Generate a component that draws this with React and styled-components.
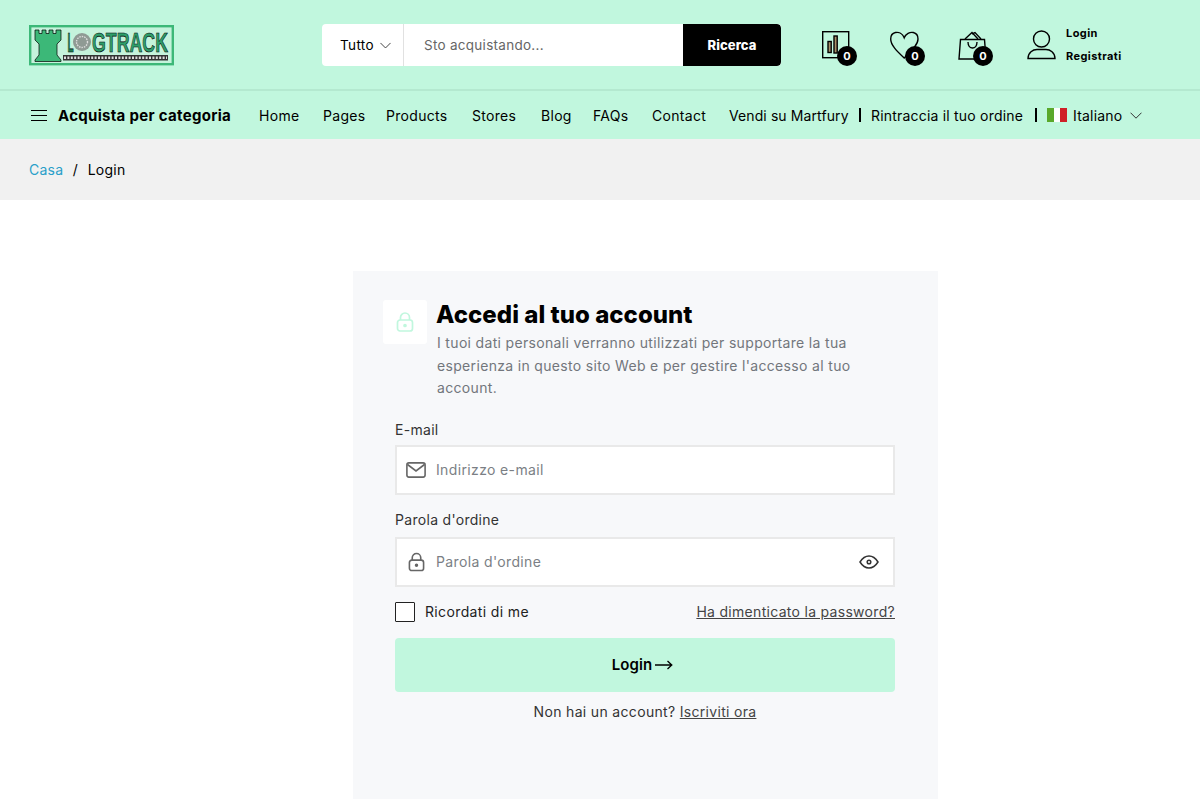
import React from 'react';
import styled, { createGlobalStyle } from 'styled-components';

const Global = createGlobalStyle`
  html, body { margin: 0; padding: 0; background: #fff; }
  body { font-family: "Inter", "Open Sans", sans-serif; color: #000; height: 799px; overflow: hidden; }
  * { box-sizing: border-box; }
`;

const Page = styled.div`width: 1200px; height: 799px; overflow: hidden;`;
const Header = styled.header`height: 91px; background: #c1f7de; border-bottom: 2px solid #b4e9d0; display: flex; align-items: flex-start; padding: 24px 0 0 29px;`;
const LogoSvg = styled.svg`width: 145px; height: 41px; flex: none; display: block; margin-top: 1px;`;
const SearchBar = styled.div`margin-left: 148px; width: 459px; height: 42px; background: #fff; border-radius: 4px; display: flex; overflow: hidden; flex: none;`;
const SelectBox = styled.div`width: 82px; border-right: 1px solid #e1e1e1; display: flex; align-items: center; padding-left: 18px; gap: 6px; font-size: 13.5px; letter-spacing: .35px; color: #000;`;
const Query = styled.div`flex: 1; display: flex; align-items: center; padding-left: 20px; font-size: 13.5px; color: #666; letter-spacing: .28px;`;
const SearchBtn = styled.button`width: 98px; border: 0; background: #000; color: #fff; font: 800 13px "Inter", sans-serif; letter-spacing: .1px; border-radius: 0 4px 4px 0;`;
const Icons = styled.div`display: flex; margin-left: 41px; margin-top: 7px;`;
const IconBox = styled.div`position: relative; width: 68px; height: 36px; flex: none; svg { display: block; }`;
const Badge = styled.span`position: absolute; left: 15px; top: 15px; width: 20px; height: 20px; border-radius: 50%; background: #000; color: #fff; font-size: 11px; font-weight: 700; display: flex; align-items: center; justify-content: center;`;
const Account = styled.div`display: flex; gap: 10px; margin: -1px 0 0 1px;`;
const AccountLinks = styled.div`display: flex; flex-direction: column; gap: 5px; margin-top: -6px; font-size: 11px; font-weight: 700; line-height: 18px; letter-spacing: .42px;`;

const Nav = styled.nav`height: 48px; background: #c1f7de; display: flex; align-items: center; padding-left: 31px; font-size: 14px; white-space: nowrap;`;
const Category = styled.div`display: flex; align-items: center; gap: 11px; font-size: 15px; font-weight: 700; width: 228px; flex: none; letter-spacing: .3px;`;
const NavLink = styled.a`flex: none; width: ${p => p.$w}px; letter-spacing: ${p => p.$ls}px;`;
const Divider = styled.span`width: 2px; height: 14px; background: #000; flex: none; margin: 0 ${p => p.$r}px 0 ${p => p.$l}px;`;
const Flag = styled.span`display: flex; width: 20px; height: 14px; margin-right: 6px; flex: none; i { flex: 1; }`;
const FlagGreen = styled.i`background: #5aa92b;`;
const FlagWhite = styled.i`background: #fff;`;
const FlagRed = styled.i`background: #cf2027;`;

const Crumbs = styled.div`height: 61px; background: #f1f1f1; display: flex; align-items: center; padding-left: 29px; font-size: 14px; gap: 9.5px; letter-spacing: .25px;`;
const CrumbLink = styled.a`color: #2a9fc9;`;

const Main = styled.main`padding: 71px 0 0 353px;`;
const Card = styled.section`width: 585px; height: 540px; background: #f7f8fa; padding: 29px 43px 0 30px;`;
const Head = styled.div`display: flex; gap: 10px;`;
const LockTile = styled.div`width: 44px; height: 44px; background: #fff; border-radius: 3px; flex: none; display: flex; align-items: center; justify-content: center;`;
const Title = styled.h1`margin: 1px 0 0 -1px; font-size: 24px; line-height: 28px; font-weight: 800; letter-spacing: .03px;`;
const Lead = styled.p`margin: 3px 0 0; font-size: 14px; line-height: 22.6px; color: #72767c; width: 430px; letter-spacing: .33px;`;
const Form = styled.div`margin-left: 12px; margin-top: 20px;`;
const Label = styled.div`font-size: 14px; line-height: 20px; color: #333; margin-bottom: ${p => p.$mb}px; letter-spacing: .3px;`;
const Field = styled.div`height: 50px; background: #fff; border: 2px solid #e9e9e9; display: flex; align-items: center; padding: 0 14px 0 9px; margin-bottom: ${p => p.$mb}px;`;
const FieldIcon = styled.span`width: 20px; height: 20px; flex: none; margin-right: 10px; display: flex; justify-content: center; align-items: center;`;
const Placeholder = styled.span`flex: 1; font-size: 14px; color: #7b7f85; letter-spacing: .36px;`;
const Row = styled.div`display: flex; align-items: center; justify-content: space-between; height: 20px; margin-top: 15px; font-size: 14px;`;
const Check = styled.label`display: flex; align-items: center; gap: 10px; color: #222; letter-spacing: .36px;`;
const Box = styled.span`width: 20px; height: 20px; background: #fff; border: 1.5px solid #222; border-radius: 1px; display: block;`;
const Under = styled.a`text-decoration: underline; color: #444; letter-spacing: .3px;`;
const LoginBtn = styled.button`width: 100%; height: 54px; margin-top: 16px; padding: 0 5px 0 0; border: 0; border-radius: 4px; background: #c1f7de; color: #000; font: 600 15px "Inter", sans-serif; letter-spacing: .1px; display: flex; align-items: center; justify-content: center; gap: 3px;`;
const Foot = styled.div`text-align: center; margin-top: 10px; font-size: 14px; line-height: 20px; color: #333; letter-spacing: .33px;`;

const Bars = () => <svg width="16" height="13" viewBox="0 0 16 13" fill="none" stroke="#000" strokeWidth="1"><path d="M0 1.500h16M0 6.500h16M0 11.500h16"/></svg>;
const Chevron = ({ w = 12 }) => <svg width={w} height="7" viewBox="0 0 12 7" fill="none" stroke="#333" strokeWidth="1"><path d="M.5.7 6 6.200 11.500.7"/></svg>;

const Logo = () => (
  <LogoSvg viewBox="0 0 145 41">
    <rect x="1.200" y="1.200" width="142.600" height="38" fill="#c5f3dc" stroke="#3cb878" strokeWidth="2.400"/>
    <path d="M6 5h4v3.500h3V5h4v3.500h3V5h4v3.500h3V5h5v10l-4 4v11l4 5v1.500H6V35l4-5V19l-4-4z" fill="#3cb878" stroke="#000" strokeWidth=".7"/>
    <text transform="translate(38.500 27) scale(.36 1)" fontFamily="Liberation Sans" fontWeight="700" fontSize="28" fill="#1f7d52" stroke="#000" strokeWidth=".6">L</text>
    <circle cx="53" cy="17" r="9" fill="#8f9a94"/>
    <circle cx="53" cy="17" r="5.500" fill="none" stroke="#ddd" strokeWidth="1.400" strokeDasharray="1.500 1"/>
    <text transform="translate(63 27) scale(.635 1)" fontFamily="Liberation Sans" fontWeight="700" fontSize="28" fill="#2f9e6b" stroke="#000" strokeWidth=".6">GTRACK</text>
    <rect x="34" y="30" width="105" height="5.500" fill="#333"/>
    <path d="M35 32.700h103" stroke="#ddd" strokeWidth="2.400" strokeDasharray="2 1.400"/>
  </LogoSvg>
);

const Chart = () => <svg width="28" height="28" viewBox="0 0 28 28" fill="none" stroke="#000" strokeWidth="1.400"><rect x=".7" y=".7" width="26" height="26"/><rect x="6" y="10.500" width="3.200" height="11" fill="#a98f68"/><rect x="12" y="5" width="3.200" height="17" fill="#a98f68"/></svg>;
const Heart = () => <svg width="29" height="28" viewBox="0 0 29 28" fill="none" stroke="#000" strokeWidth="1.400"><path d="M14.200 6.800C12.600 2.600 8.800.8 5.400 1.500 2.200 2.200.7 5 .7 8c0 6 6 12 13.500 19C21 20 28 14 28 8c0-3-1.500-5.800-4.700-6.500-3.400-.7-7.500 1.100-9.100 5.300z"/></svg>;
const Bag = () => <svg width="30" height="30" viewBox="0 0 30 30" fill="none" stroke="#000" strokeWidth="1.400"><path d="M2.500 8.500 1 28h27L26.500 8.500z"/><path d="m7 8 7-6.500L20 8M14 3l3-1.500L23 8M10 11c0 8 9 8 9 0"/></svg>;
const User = () => <svg width="29" height="30" viewBox="0 0 29 30" fill="none" stroke="#000" strokeWidth="1.400"><circle cx="14.500" cy="9" r="8"/><path d="M1 28.500c0-6 5-9 9-9h9c4 0 9 3 9 9z"/></svg>;
const Lock = ({ color, w = 18, h = 20 }) => <svg width={w} height={h} viewBox="0 0 18 20" fill="none" stroke={color} strokeWidth="1.700"><rect x="1.500" y="8" width="15" height="11" rx="2.500"/><path d="M4.500 8V5.500a4.500 4.500 0 0 1 9 0V8"/><circle cx="9" cy="13.500" r="1" fill={color}/></svg>;
const Mail = () => <svg width="20" height="16" viewBox="0 0 20 16" fill="none" stroke="#666" strokeWidth="1.600"><rect x=".9" y=".9" width="18.200" height="14.200" rx="2"/><path d="m1.500 2.500 8.500 6.500 8.500-6.500"/></svg>;
const Eye = () => <svg width="20" height="14" viewBox="0 0 20 14" fill="none" stroke="#333" strokeWidth="1.500"><path d="M1 7c2.500-4 5.500-6 9-6s6.500 2 9 6c-2.500 4-5.500 6-9 6S3.500 11 1 7z"/><circle cx="10" cy="7" r="1.800"/></svg>;
const Arrow = () => <svg width="18" height="10" viewBox="0 0 18 10" fill="none" stroke="#000" strokeWidth="1.300"><path d="M0 5h16.500M12.500 1l4.300 4-4.300 4"/></svg>;

const links = [['Home', 64], ['Pages', 63], ['Products', 86], ['Stores', 69], ['Blog', 52], ['FAQs', 59], ['Contact', 77]];

export default function App() {
  return (
    <Page>
      <Global />
      <Header>
        <Logo />
        <SearchBar>
          <SelectBox>Tutto <Chevron w={11} /></SelectBox>
          <Query>Sto acquistando...</Query>
          <SearchBtn>Ricerca</SearchBtn>
        </SearchBar>
        <Icons>
          <IconBox><Chart /><Badge>0</Badge></IconBox>
          <IconBox><Heart /><Badge>0</Badge></IconBox>
          <IconBox><Bag /><Badge>0</Badge></IconBox>
          <Account><User /><AccountLinks><a>Login</a><a>Registrati</a></AccountLinks></Account>
        </Icons>
      </Header>
      <Nav>
        <Category><Bars />Acquista per categoria</Category>
        {links.map(([t, w]) => <NavLink key={t} $w={w} $ls={.3}>{t}</NavLink>)}
        <NavLink $w={119} $ls={.1}>Vendi su Martfury</NavLink>
        <Divider $l={11} $r={10} />
        <NavLink $w={152} $ls={.2}>Rintraccia il tuo ordine</NavLink>
        <Divider $l={12} $r={10} />
        <Flag><FlagGreen /><FlagWhite /><FlagRed /></Flag>
        <NavLink $w={57} $ls={.2}>Italiano</NavLink>
        <Chevron />
      </Nav>
      <Crumbs><CrumbLink>Casa</CrumbLink><span>/</span><span>Login</span></Crumbs>
      <Main>
        <Card>
          <Head>
            <LockTile><Lock color="#c1f7de" /></LockTile>
            <div>
              <Title>Accedi al tuo account</Title>
              <Lead>I tuoi dati personali verranno utilizzati per supportare la tua esperienza in questo sito Web e per gestire l'accesso al tuo account.</Lead>
            </div>
          </Head>
          <Form>
            <Label $mb={5}>E-mail</Label>
            <Field $mb={15}><FieldIcon><Mail /></FieldIcon><Placeholder>Indirizzo e-mail</Placeholder></Field>
            <Label $mb={7}>Parola d'ordine</Label>
            <Field $mb={0}><FieldIcon><Lock color="#666" w={17} h={20} /></FieldIcon><Placeholder>Parola d'ordine</Placeholder><Eye /></Field>
            <Row><Check><Box />Ricordati di me</Check><Under>Ha dimenticato la password?</Under></Row>
            <LoginBtn>Login <Arrow /></LoginBtn>
            <Foot>Non hai un account? <Under>Iscriviti ora</Under></Foot>
          </Form>
        </Card>
      </Main>
    </Page>
  );
}
